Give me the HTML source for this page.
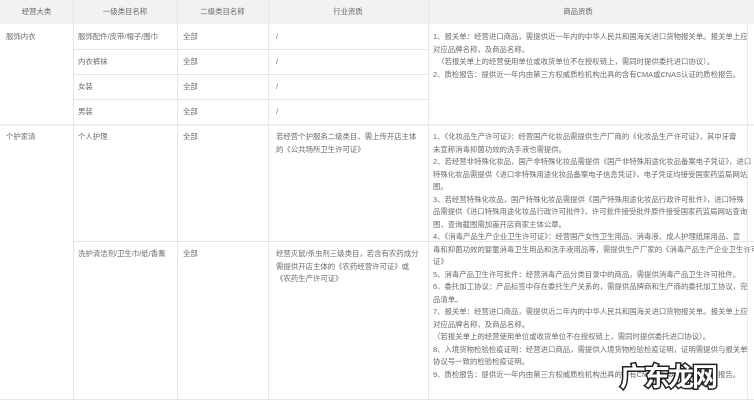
<!DOCTYPE html>
<html><head><meta charset="utf-8"><style>
*{margin:0;padding:0;box-sizing:border-box}
body{width:754px;height:404px;overflow:hidden;background:#fff;font-family:"Liberation Sans","Noto Sans CJK SC",sans-serif;color:#6a6a6a;font-size:7.4px;position:relative}
.hd{position:absolute;left:0;top:0;width:754px;height:24px;background:#f2f2f2}
.h{position:absolute;top:0;height:24px;line-height:24px;text-align:center;color:#666}
.v{position:absolute;width:1px;background:#e6e6e6}
.l{position:absolute;height:1px;background:#e6e6e6}
.t{position:absolute;white-space:nowrap;line-height:12.5px}
.wm{position:absolute;left:620px;top:360px;font-size:26px;font-weight:bold;color:#fff;-webkit-text-stroke:3px #222;paint-order:stroke fill;font-family:"Noto Sans CJK SC",sans-serif;letter-spacing:-2px;line-height:32px}
</style></head><body>
<div class="hd"></div>
<div class="h" style="left:0;width:73px">经营大类</div>
<div class="h" style="left:73px;width:104px">一级类目名称</div>
<div class="h" style="left:177px;width:91px">二级类目名称</div>
<div class="h" style="left:268px;width:160px">行业资质</div>
<div class="h" style="left:428px;width:300px">商品资质</div>

<div class="v" style="left:73px;top:0;height:400px"></div>
<div class="v" style="left:177px;top:0;height:400px"></div>
<div class="v" style="left:268px;top:0;height:400px"></div>
<div class="v" style="left:428px;top:0;height:400px"></div>
<div class="l" style="left:73px;top:49px;width:355px"></div>
<div class="l" style="left:73px;top:74px;width:355px"></div>
<div class="l" style="left:73px;top:99px;width:355px"></div>
<div class="l" style="left:0;top:124px;width:754px;height:2px;background:#eee"></div>
<div class="l" style="left:73px;top:241px;width:681px"></div>
<div class="l" style="left:0;top:399px;width:754px"></div>

<div class="t" style="left:6px;top:31px">服饰内衣</div>
<div class="t" style="left:78px;top:31px">服饰配件/皮带/帽子/围巾</div>
<div class="t" style="left:183px;top:31px">全部</div>
<div class="t" style="left:276px;top:31px">/</div>
<div class="t" style="left:78px;top:56px">内衣裤袜</div>
<div class="t" style="left:183px;top:56px">全部</div>
<div class="t" style="left:276px;top:56px">/</div>
<div class="t" style="left:78px;top:81px">女装</div>
<div class="t" style="left:183px;top:81px">全部</div>
<div class="t" style="left:276px;top:81px">/</div>
<div class="t" style="left:78px;top:106px">男装</div>
<div class="t" style="left:183px;top:106px">全部</div>
<div class="t" style="left:276px;top:106px">/</div>

<div class="t" style="left:433px;top:31px">1、报关单：经营进口商品，需提供近一年内的中华人民共和国海关进口货物报关单。报关单上应<br>对应品牌名称，及商品名称。<br>&nbsp;&nbsp;（若报关单上的经营使用单位或收货单位不在授权链上，需同时提供委托进口协议）。<br>2、质检报告：提供近一年内由第三方权威质检机构出具的含有CMA或CNAS认证的质检报告。</div>

<div class="t" style="left:6px;top:131px">个护家清</div>
<div class="t" style="left:78px;top:131px">个人护理</div>
<div class="t" style="left:183px;top:131px">全部</div>
<div class="t" style="left:276px;top:131px">若经营个护服务二级类目，需上传开店主体<br>的《公共场所卫生许可证》</div>

<div class="t" style="left:78px;top:248px">洗护清洁剂/卫生巾/纸/香薰</div>
<div class="t" style="left:183px;top:248px">全部</div>
<div class="t" style="left:276px;top:248px">经营灭鼠/杀虫剂三级类目，若含有农药成分<br>需提供开店主体的《农药经营许可证》或<br>《农药生产许可证》</div>

<div class="t" style="left:433px;top:131px">1、《化妆品生产许可证》：经营国产化妆品需提供生产厂商的《化妆品生产许可证》，其中牙膏<br>未宣称消毒抑菌功效的洗手液也需提供。<br>2、若经营非特殊化妆品，国产非特殊化妆品需提供《国产非特殊用途化妆品备案电子凭证》，进口<br>特殊化妆品需提供《进口非特殊用途化妆品备案电子信息凭证》，电子凭证均接受国家药监局网站<br>图。<br>3、若经营特殊化妆品，国产特殊化妆品需提供《国产特殊用途化妆品行政许可批件》，进口特殊<br>品需提供《进口特殊用途化妆品行政许可批件》，许可批件接受批件原件接受国家药监局网站查询<br>图，查询截图需加盖开店商家主体公章。<br>4、《消毒产品生产企业卫生许可证》：经营国产女性卫生用品、消毒液、成人护理纸尿用品、宣<br>毒和抑菌功效的婴童消毒卫生用品和洗手液用品等，需提供生产厂家的《消毒产品生产企业卫生许可<br>证》<br>5、消毒产品卫生许可批件：经营消毒产品分类目录中的商品，需提供消毒产品卫生许可批件。<br>6、委托加工协议：产品标签中存在委托生产关系的，需提供品牌商和生产商的委托加工协议，完<br>品清单。<br>7、报关单：经营进口商品，需提供近二年内的中华人民共和国海关进口货物报关单。报关单上应<br>对应品牌名称，及商品名称。<br>（若报关单上的经营使用单位或收货单位不在授权链上，需同时提供委托进口协议）。<br>8、入境货物检验检疫证明：经营进口商品，需提供入境货物检验检疫证明，证明需提供与报关单<br>协议号一致的检验检疫证明。<br>9、质检报告：提供近一年内由第三方权威质检机构出具的含有CMA或CNAS认证的质检报告。</div>
<div class="v" style="left:747px;top:24px;height:376px;background:#eaeaea"></div>

<div class="wm">广东龙网</div>
</body></html>
